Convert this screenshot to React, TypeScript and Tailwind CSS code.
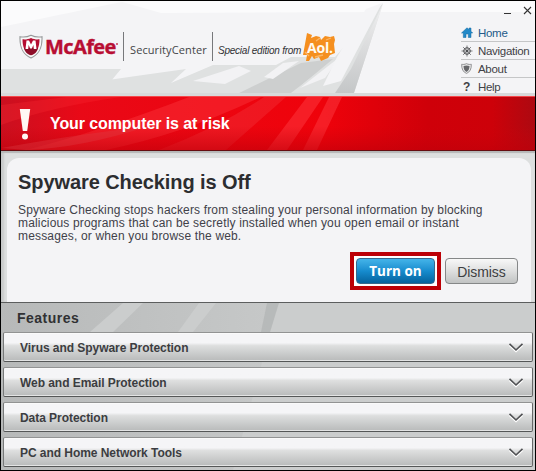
import type { ReactNode } from 'react';

const features = [
  'Virus and Spyware Protection',
  'Web and Email Protection',
  'Data Protection',
  'PC and Home Network Tools',
];

function HeaderBackdrop() {
  return (
    <svg className="absolute inset-0 h-full w-full" viewBox="0 0 534 95" preserveAspectRatio="none" aria-hidden="true">
      <defs>
        <linearGradient id="blade" x1="0" y1="0" x2="0" y2="1">
          <stop offset="0" stopColor="#f0f0f1" />
          <stop offset="1" stopColor="#c3c5c6" />
        </linearGradient>
      </defs>
      <path d="M0 26 L125 0 H0Z" fill="#fbfbfc" />
      <path d="M118 0 H534 V11 H380 L160 12Z" fill="#fbfbfc" />
      <path d="M0 68 H120 L110 80 L52 87 L135 75 L185 68 L170 82 L212 64 H275 L290 56 L334 56 L382 2 L352 95 H0Z" fill="#dfe1e1" />
      <path d="M232 95 L300 62 L332 58 L303 82 L289 95Z" fill="#cdcfcf" />
      <path d="M192 80 L238 65 L250 70 L224 83Z" fill="#f2f2f4" />
      <path d="M263 76 L282 62 L298 60 L272 78Z" fill="#f2f2f4" />
      <path d="M286 95 L338 55 L328 80 L318 95Z" fill="#e0e2e2" />
      <path d="M299 87 L340 55 L324 77Z" fill="#f2f2f4" />
      <path d="M382 3 L352 95 H332 L350 68Z" fill="url(#blade)" />
      <path d="M381 2 L340 80 L322 85 L336 56 L365 8Z" fill="#f4f4f6" />
      <path d="M0 92 H534 V95 H0Z" fill="#d8d9da" />
    </svg>
  );
}

function ShieldLogo() {
  return (
    <svg width="24" height="25" viewBox="0 0 24 25" className="shrink-0" aria-hidden="true">
      <path d="M12 1.2 C8 3.2 4 3.3 1 2.7 C.6 13 3 20 12 24 C21 20 23.4 13 23 2.7 C20 3.3 16 3.2 12 1.2Z" fill="#f7f7f7" stroke="#959899" strokeWidth="1.1" />
      <path d="M12 4 C9 5.4 6 5.7 3.5 5.3 C3.5 13 5.5 18 12 21.3 C18.500 18 20.500 13 20.500 5.300 C18 5.700 15 5.400 12 4Z" fill="#b50d31" />
      <path d="M5 14 H19 C18 18 16 20 12 21.300 C8 20 6 18 5 14Z" fill="#8d0e29" />
      <path d="M6.500 15 L7.500 6.500 H10 L12 10.500 L14 6.500 H16.500 L17.500 15 H14.800 L14.400 11 L12.800 14.500 H11.200 L9.600 11 L9.200 15Z" fill="#fff" />
    </svg>
  );
}

function AolLogo() {
  return (
    <div className="relative h-[30px] w-[34px] shrink-0">
      <svg width="34" height="30" viewBox="0 0 34 30" className="absolute inset-0" aria-hidden="true">
        <path d="M5 1 L10 3 L9 6 L14 4 L18 5 L19 8 L23 4 L28 5 L32 4 L33 8 L32 12 L33 21 L28 23 L26 26 L19 29 L17 25 L12 27 L10 24 L7 29 L4 29 L5 23 L1 23 L3 12Z" fill="#f58f1f" />
        <path d="M14 9 L18 6 M24 8 L29 6 M3 20 L7 24 M13 25 L21 23" stroke="#fbb666" strokeWidth="1.300" />
      </svg>
      <span className="absolute left-[5px] top-[8px] font-['Open_Sans'] text-[14px] leading-[15px] font-bold tracking-[-0.2px] text-[#fffaf0]">Aol.</span>
    </div>
  );
}

function MenuItem({ icon, label, active = false, last = false }: { icon: ReactNode; label: string; active?: boolean; last?: boolean }) {
  return (
    <a className={`flex h-[18px] items-center border-b text-[11.5px] leading-[13px] tracking-[-0.3px] ${last ? 'border-transparent' : 'border-[#c5c6c7]'} ${active ? 'text-[#235b8a]' : 'text-[#414145]'}`}>
      <span className="flex w-[17px] shrink-0">{icon}</span>
      <span className="pt-px">{label}</span>
    </a>
  );
}

function HomeIcon() {
  return (
    <svg width="12" height="11" viewBox="0 0 12 11" aria-hidden="true">
      <path d="M.5 6 L6 .8 L8 2.600 V1 H10 V4.300 L11.700 6 H10 V10.500 H7.300 V7 H5 V10.500 H2.300 V6Z" fill="#2389c8" stroke="#176ba0" strokeWidth=".5" />
    </svg>
  );
}

function WheelIcon() {
  return (
    <svg width="12" height="12" viewBox="0 0 12 12" fill="none" stroke="#4c4d50" aria-hidden="true">
      <circle cx="6" cy="6" r="3.300" strokeWidth="1" />
      <circle cx="6" cy="6" r=".7" fill="#4c4d50" />
      <path d="M6 .5 V11.500 M.5 6 H11.500 M2.100 2.100 L9.900 9.900 M9.900 2.100 L2.100 9.900" strokeWidth=".7" />
    </svg>
  );
}

function AboutIcon() {
  return (
    <svg width="11" height="11" viewBox="0 0 11 11" aria-hidden="true">
      <path d="M5.500 .7 C3.500 1.600 2 1.500 .7 1.300 C.6 6 2 9 5.500 10.400 C9 9 10.400 6 10.300 1.300 C9 1.500 7.500 1.600 5.500 .7Z" fill="#eee" stroke="#858688" strokeWidth=".9" />
      <path d="M5.500 2.500 L8.500 3 C8.500 6 7.500 8 5.500 9 C3.500 8 2.500 6 2.500 3Z" fill="#66676a" />
    </svg>
  );
}

function Chevron() {
  return (
    <svg width="16" height="11" viewBox="0 0 16 11" fill="none" aria-hidden="true">
      <path d="M1.500 3.300 L8 9.500 L14.500 3.300" stroke="#fff" strokeWidth="1.600" />
      <path d="M1.500 1.800 L8 8 L14.500 1.800" stroke="#505154" strokeWidth="1.600" />
    </svg>
  );
}

export default function App() {
  return (
    <main className="flex h-[471px] w-[536px] flex-col overflow-hidden border border-black bg-[#c7c9c9] font-['Liberation_Sans',Arial,sans-serif]">
      <header className="relative h-[95px] shrink-0 bg-[#f4f4f6]">
        <HeaderBackdrop />
        <div className="relative flex h-full justify-between">
          <div className="flex h-[60px] items-start pt-[31px] pl-[18px]">
            <div className="flex pt-[2px]">
              <ShieldLogo />
              <span className="ml-[2px] w-[71px] font-['Open_Sans'] text-[20px] leading-[25px] font-bold tracking-[-0.6px] text-[#b80e33] [-webkit-text-stroke:0.4px_#b80e33]">McAfee</span>
              <span className="mt-[9px] h-[2px] w-[2px] rounded-full bg-[#c63b54]" />
            </div>
            <span className="ml-[5px] h-[29px] w-px bg-[#77787b]" />
            <span className="ml-[6px] w-[78px] pt-[10px] font-['Open_Sans'] text-[11px] leading-[15px] font-medium tracking-[0.1px] whitespace-nowrap text-[#434447]">SecurityCenter</span>
            <span className="ml-[4px] h-[29px] w-px bg-[#77787b]" />
            <span className="ml-[5px] w-[84px] pt-[12px] text-[10px] leading-[14px] tracking-[-0.23px] italic whitespace-nowrap text-[#303135]">Special edition from</span>
            <AolLogo />
          </div>
          <div className="w-[74px]">
            <div className="flex h-[23px] items-end justify-end gap-[12px] pr-[3px]">
              <span className="mb-[10px] h-px w-[7px] bg-[#333]" />
              <svg width="9" height="9" viewBox="0 0 9 9" className="mb-[9px]" aria-label="Close">
                <path d="M1 1 L8 8 M8 1 L1 8" stroke="#333" strokeWidth="1.100" />
              </svg>
            </div>
            <nav>
              <MenuItem active label="Home" icon={<HomeIcon />} />
              <MenuItem label="Navigation" icon={<WheelIcon />} />
              <MenuItem label="About" icon={<AboutIcon />} />
              <MenuItem last label="Help" icon={<b className="w-[11px] pt-px text-center text-[12px]">?</b>} />
            </nav>
          </div>
        </div>
      </header>

      <section className="relative h-[55px] shrink-0 border-t border-b border-t-[#f5474b] border-b-[#650d11] bg-[#d00109]">
        <svg className="absolute inset-0 h-full w-full" viewBox="0 0 534 53" preserveAspectRatio="none" aria-hidden="true">
          <defs>
            <linearGradient id="redBase" x1="0" x2="1">
              <stop offset="0" stopColor="#ca1020" />
              <stop offset=".15" stopColor="#e90917" />
              <stop offset=".6" stopColor="#ef020b" />
              <stop offset=".8" stopColor="#cf0009" />
              <stop offset=".92" stopColor="#cd0109" />
              <stop offset="1" stopColor="#ad0911" />
            </linearGradient>
            <linearGradient id="redDepth" x1="0" y1="0" x2="0" y2="1">
              <stop offset=".55" stopColor="#cb020b" stopOpacity="0" />
              <stop offset="1" stopColor="#c0000a" stopOpacity=".6" />
            </linearGradient>
          </defs>
          <path d="M0 0 H534 V53 H0Z" fill="url(#redBase)" />
          <path d="M25 53 Q100 34 188 0 H260 Q180 38 105 53Z" fill="#fa3038" opacity=".5" />
          <path d="M158 53 Q218 30 263 0 H285 L225 53Z" fill="#f3343c" opacity=".4" />
          <path d="M266 53 L306 0 H322 L286 53Z M302 53 L328 0 H341 L316 53Z" fill="#ff4148" opacity=".45" />
          <path d="M0 8 L65 0 H120 Q50 10 0 28Z" fill="#ff3038" opacity=".25" />
          <path d="M0 0 H534 V53 H0Z" fill="url(#redDepth)" />
          <path d="M0 51 Q90 35 145 30 Q80 51 25 53Z" fill="#de4047" opacity=".35" />
        </svg>
        <div className="relative flex h-full items-center">
          <svg width="12" height="33" viewBox="0 0 12 33" className="ml-[18px]" role="img" aria-label="Warning">
            <path d="M.8 2 H11.200 L8.200 24 H3.800Z" fill="#fff7f4" />
            <circle cx="6" cy="29.500" r="3" fill="#fff7f4" />
          </svg>
          <h1 className="ml-[19px] text-[16px] leading-[20px] font-bold tracking-[-0.1px] text-white">Your computer is at risk</h1>
        </div>
      </section>

      <section className="h-[152px] shrink-0 border-b border-[#5c5e5e] bg-[#dddfdf] pt-[7px] pr-[4px] pl-[6px] shadow-[inset_0_2px_1px_#b5b7b7,inset_3px_0_2px_#c9cbcb]">
        <div className="h-full rounded-t-[12px] bg-[#f4f4f6] pt-[12px] pl-[11px]">
          <h2 className="text-[20px] leading-[24px] font-bold tracking-[-0.08px] text-[#2c2d30]">Spyware Checking is Off</h2>
          <p className="mt-[10px] text-[12px] leading-[13px] tracking-[0.16px] whitespace-nowrap text-[#414149]">
            Spyware Checking stops hackers from stealing your personal information by blocking<br />
            malicious programs that can be secretly installed when you open email or instant<br />
            messages, or when you browse the web.
          </p>
          <div className="mt-[9px] flex items-center justify-end gap-[4px] pr-[13px]">
            <div className="border-4 border-[#bc0006] bg-white p-[2px]">
              <button className="flex h-[26px] w-[79px] items-center justify-center rounded-[4px] border border-[#36698c] bg-linear-to-b from-[#43b4e9] via-[#168cce] to-[#06639d] font-['Open_Sans'] text-[13.5px] leading-[18px] font-bold text-white">Turn on</button>
            </div>
            <button className="flex h-[26px] w-[73px] items-center justify-center rounded-[4px] border border-[#858788] bg-linear-to-b from-[#f8f8f8] via-[#dedfdf] to-[#c1c3c3] pt-px text-[14px] leading-[18px] tracking-[-0.1px] text-[#3d3e42]">Dismiss</button>
          </div>
        </div>
      </section>

      <section className="relative min-h-0 grow bg-linear-to-r from-[#b7b9b9] via-[#c6c8c8] to-[#cbcccc]">
        <svg className="absolute inset-0 h-full w-full" viewBox="0 0 534 167" preserveAspectRatio="none" aria-hidden="true">
          <path d="M89 29 L122 0 H142 L112 29Z M177 29 L198 0 H215 L192 29Z M232 167 L277 0 H534 V167Z" fill="#cbcdcd" />
          <path d="M266 0 H278 L269 29 H260Z" fill="#b1b3b4" opacity=".7" />
        </svg>
        <div className="relative">
          <h3 className="flex h-[29px] items-center pl-[16px] text-[14px] leading-[18px] font-bold tracking-[0.5px] text-[#303133]">Features</h3>
          <ul className="flex flex-col gap-[5px] px-[2px]">
            {features.map((feature) => (
              <li key={feature} className="flex h-[30px] items-center justify-between rounded-[2px] border border-t-[#929393] border-r-[#666868] border-b-[#555757] border-l-[#777979] bg-linear-to-b from-[#f5f5f7] from-35% via-[#dedfdf] via-45% to-[#b8baba] pr-[8px] pl-[16px] shadow-[inset_0_1px_#fafafa,inset_0_-1px_#e3e4e4]">
                <span className="pt-[2px] text-[12px] leading-[16px] font-bold tracking-[-0.05px] text-[#3c3d41]">{feature}</span>
                <Chevron />
              </li>
            ))}
          </ul>
        </div>
      </section>
    </main>
  );
}
